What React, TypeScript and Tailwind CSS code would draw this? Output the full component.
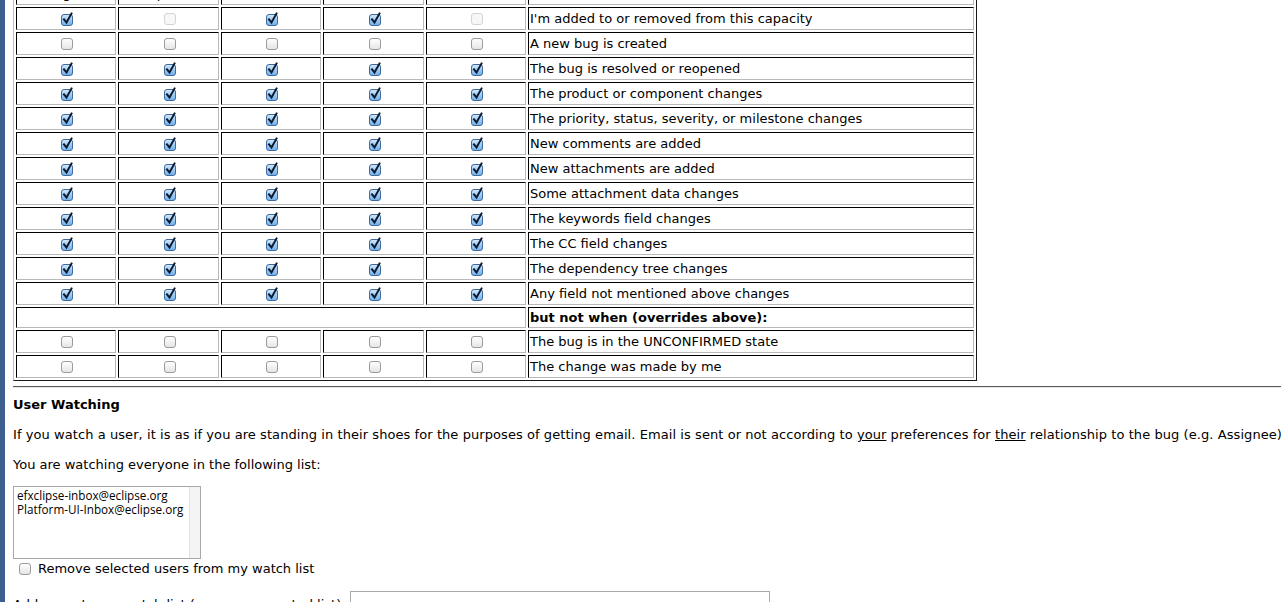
import React from "react";

type C = 0 | 1 | 2; // 0 unchecked, 1 checked, 2 disabled

function Box({ v }: { v: C }) {
  if (v === 1) {
    return (
      <svg width="14" height="14" viewBox="0 0 14 14" className="inline-block overflow-visible align-middle">
        <defs>
          <linearGradient id="cg" x1="0" y1="0" x2="0" y2="1">
            <stop offset="0" stopColor="#d6eafc" />
            <stop offset="0.5" stopColor="#9ccaf3" />
            <stop offset="1" stopColor="#6fb0ec" />
          </linearGradient>
        </defs>
        <rect x="1.5" y="2.5" width="11" height="11" rx="2.5" fill="url(#cg)" stroke="#40699c" />
        <path d="M4 7.5 L6.5 10.5 L11.5 1.5" fill="none" stroke="#0b1a2e" strokeWidth="2" strokeLinecap="square" />
      </svg>
    );
  }
  if (v === 2) {
    return (
      <svg width="14" height="14" viewBox="0 0 14 14" className="inline-block align-middle">
        <rect x="1.5" y="1.5" width="11" height="11" rx="2.5" fill="#f7f7f7" stroke="#d4d4d4" />
      </svg>
    );
  }
  return (
    <svg width="14" height="14" viewBox="0 0 14 14" className="inline-block align-middle">
      <defs>
        <linearGradient id="ug" x1="0" y1="0" x2="0" y2="1">
          <stop offset="0" stopColor="#ffffff" />
          <stop offset="1" stopColor="#e4e4e4" />
        </linearGradient>
      </defs>
      <rect x="1.5" y="1.5" width="11" height="11" rx="2.5" fill="url(#ug)" stroke="#9b9b9b" />
    </svg>
  );
}

const A: C[] = [1, 1, 1, 1, 1];
const rows: [string, C[]][] = [
  ["I'm added to or removed from this capacity", [1, 2, 1, 1, 2]],
  ["A new bug is created", [0, 0, 0, 0, 0]],
  ["The bug is resolved or reopened", A],
  ["The product or component changes", A],
  ["The priority, status, severity, or milestone changes", A],
  ["New comments are added", A],
  ["New attachments are added", A],
  ["Some attachment data changes", A],
  ["The keywords field changes", A],
  ["The CC field changes", A],
  ["The dependency tree changes", A],
  ["Any field not mentioned above changes", A],
];
const rows2: [string, C[]][] = [
  ["The bug is in the UNCONFIRMED state", [0, 0, 0, 0, 0]],
  ["The change was made by me", [0, 0, 0, 0, 0]],
];

const cell =
  "border border-t-black border-l-black border-r-[#b9b9b9] border-b-[#b9b9b9] p-0";

function Row({ label, vals }: { label: string; vals: C[] }) {
  return (
    <tr>
      {vals.map((v, i) => (
        <td key={i} className={`${cell} h-[23px] text-center align-middle leading-none`}>
          <span className="relative left-[1px]">
            <Box v={v} />
          </span>
        </td>
      ))}
      <td className={`${cell} h-[23px] pl-[1px] align-middle leading-[16px]`}>{label}</td>
    </tr>
  );
}

export default function App() {
  const headers = ["Assignee", "Reporter", "QA Contact", "Voter", "CC"];
  return (
    <div
      className="flex min-h-screen bg-white text-black text-[13px]"
      style={{ fontFamily: '"DejaVu Sans", Verdana, sans-serif' }}
    >
      <div className="w-[5px] shrink-0 bg-[#3c5f8f]" />
      <div className="flex-1 overflow-hidden pl-2">
        <table
          className="-mt-[21px] w-[964px] table-fixed border-separate border-spacing-[2px] border border-t-[#bdbdbd] border-l-[#bdbdbd] border-r-[#1a1a1a] border-b-[#1a1a1a]"
        >
          <colgroup>
            <col className="w-[100px]" />
            <col className="w-[101px]" />
            <col className="w-[100px]" />
            <col className="w-[101px]" />
            <col className="w-[100px]" />
            <col />
          </colgroup>
          <tbody>
            <tr>
              {headers.map((h, i) => (
                <td key={i} className={`${cell} h-[23px] text-center align-bottom leading-[16px]`}>
                  <span className="relative -top-[2px]">{h}</span>
                </td>
              ))}
              <td className={`${cell} h-[23px]`} />
            </tr>
            {rows.map(([l, v], i) => (
              <Row key={i} label={l} vals={v} />
            ))}
            <tr>
              <td colSpan={5} className={`${cell} h-[21px]`} />
              <td className={`${cell} h-[21px] pl-[1px] align-middle font-bold leading-[16px]`}>
                but not when (overrides above):
              </td>
            </tr>
            {rows2.map(([l, v], i) => (
              <Row key={i} label={l} vals={v} />
            ))}
          </tbody>
        </table>

        <div className="mt-[5px] -mr-[20px] border-t border-t-[#5a5a5a] border-b border-b-[#e6e6e6]" />

        <h3 className="mt-[7px] font-bold leading-[20px]">User Watching</h3>
        <p className="mt-[10px] whitespace-nowrap leading-[20px] tracking-[0.07px]">
          If you watch a user, it is as if you are standing in their shoes for the purposes of getting
          email. Email is sent or not according to <u>your</u> preferences for <u>their</u> relationship
          to the bug (e.g. Assignee).
        </p>
        <p className="mt-[10px] leading-[20px]">You are watching everyone in the following list:</p>

        <div className="mt-[11px] flex h-[73px] w-[188px] border border-[#a8a8a8] bg-white">
          <div
            className="flex-1 pl-[3px] pt-[1px] text-[11.7px] leading-[14px]"
            style={{ fontFamily: '"Open Sans", "DejaVu Sans", sans-serif' }}
          >
            <div>efxclipse-inbox@eclipse.org</div>
            <div>Platform-UI-Inbox@eclipse.org</div>
          </div>
          <div className="w-[11px] border-l border-l-[#e2e2e2] bg-[#f4f4f4]" />
        </div>

        <label className="mt-0 flex items-center gap-[6px] pl-[5px] leading-[20px]">
          <Box v={0} />
          <span>Remove selected users from my watch list</span>
        </label>

        <div className="mt-[12px] flex items-start gap-[4px] leading-[20px]">
          <span className="pt-[4px]">Add users to my watch list (comma separated list):</span>
          <div className="h-[24px] w-[420px] border border-[#a9a9a9] bg-white" />
        </div>
      </div>
    </div>
  );
}
